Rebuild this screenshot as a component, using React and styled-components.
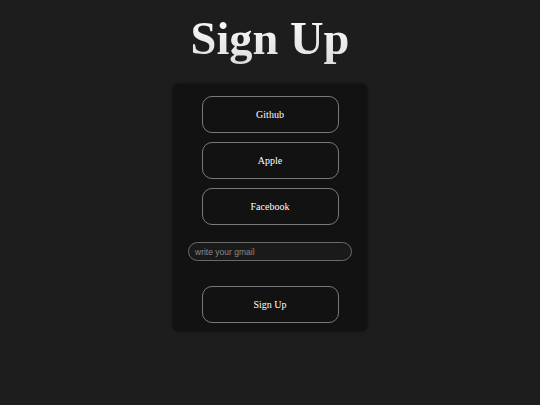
import React from "react";
import styled, { createGlobalStyle } from "styled-components";

const Global = createGlobalStyle`
  html, body {
    margin: 0;
    padding: 0;
    background: #1d1d1d;
  }
  body {
    font-family: "Liberation Serif", serif;
  }
`;

const Page = styled.div`
  width: 540px;
  height: 405px;
  display: flex;
  flex-direction: column;
  align-items: center;
  padding-top: 11px;
  box-sizing: border-box;
`;

const Title = styled.h1`
  margin: 0;
  font-family: "Liberation Serif", serif;
  font-size: 46.5px;
  font-weight: bold;
  line-height: 55px;
  background: linear-gradient(180deg, #ffffff 0%, #dcdcdc 100%);
  -webkit-background-clip: text;
  background-clip: text;
  color: transparent;
`;

const Card = styled.div`
  margin-top: 18px;
  width: 194px;
  box-sizing: border-box;
  padding: 12px 0 8px;
  background: #121212;
  border-radius: 6px;
  box-shadow: 0 0 3px rgba(0, 0, 0, 0.5), 0 0 0 1px #1a1a1a;
  display: flex;
  flex-direction: column;
  align-items: center;
`;

const Button = styled.button`
  width: 137px;
  height: 37px;
  margin-top: ${(p) => p.$gap || 0}px;
  box-sizing: border-box;
  background: transparent;
  border: 1px solid #7a7a7a;
  border-radius: 10px;
  color: #ffffff;
  font-family: "Liberation Serif", serif;
  font-size: 10px;
  cursor: pointer;
`;

const Input = styled.input`
  margin-top: 17px;
  width: 164px;
  height: 19px;
  box-sizing: border-box;
  padding: 0 6px;
  background: #1a1a1a;
  border: 1px solid #6a6a6a;
  border-radius: 10px;
  color: #ddd;
  font-family: "Liberation Sans", Arial, sans-serif;
  font-size: 8.5px;
  outline: none;
  &::placeholder {
    color: #8a8a8a;
  }
`;

export default function App() {
  return (
    <>
      <Global />
      <Page>
        <Title>Sign Up</Title>
        <Card>
          <Button>Github</Button>
          <Button $gap={9}>Apple</Button>
          <Button $gap={9}>Facebook</Button>
          <Input type="email" placeholder="write your gmail" />
          <Button $gap={25}>Sign Up</Button>
        </Card>
      </Page>
    </>
  );
}
